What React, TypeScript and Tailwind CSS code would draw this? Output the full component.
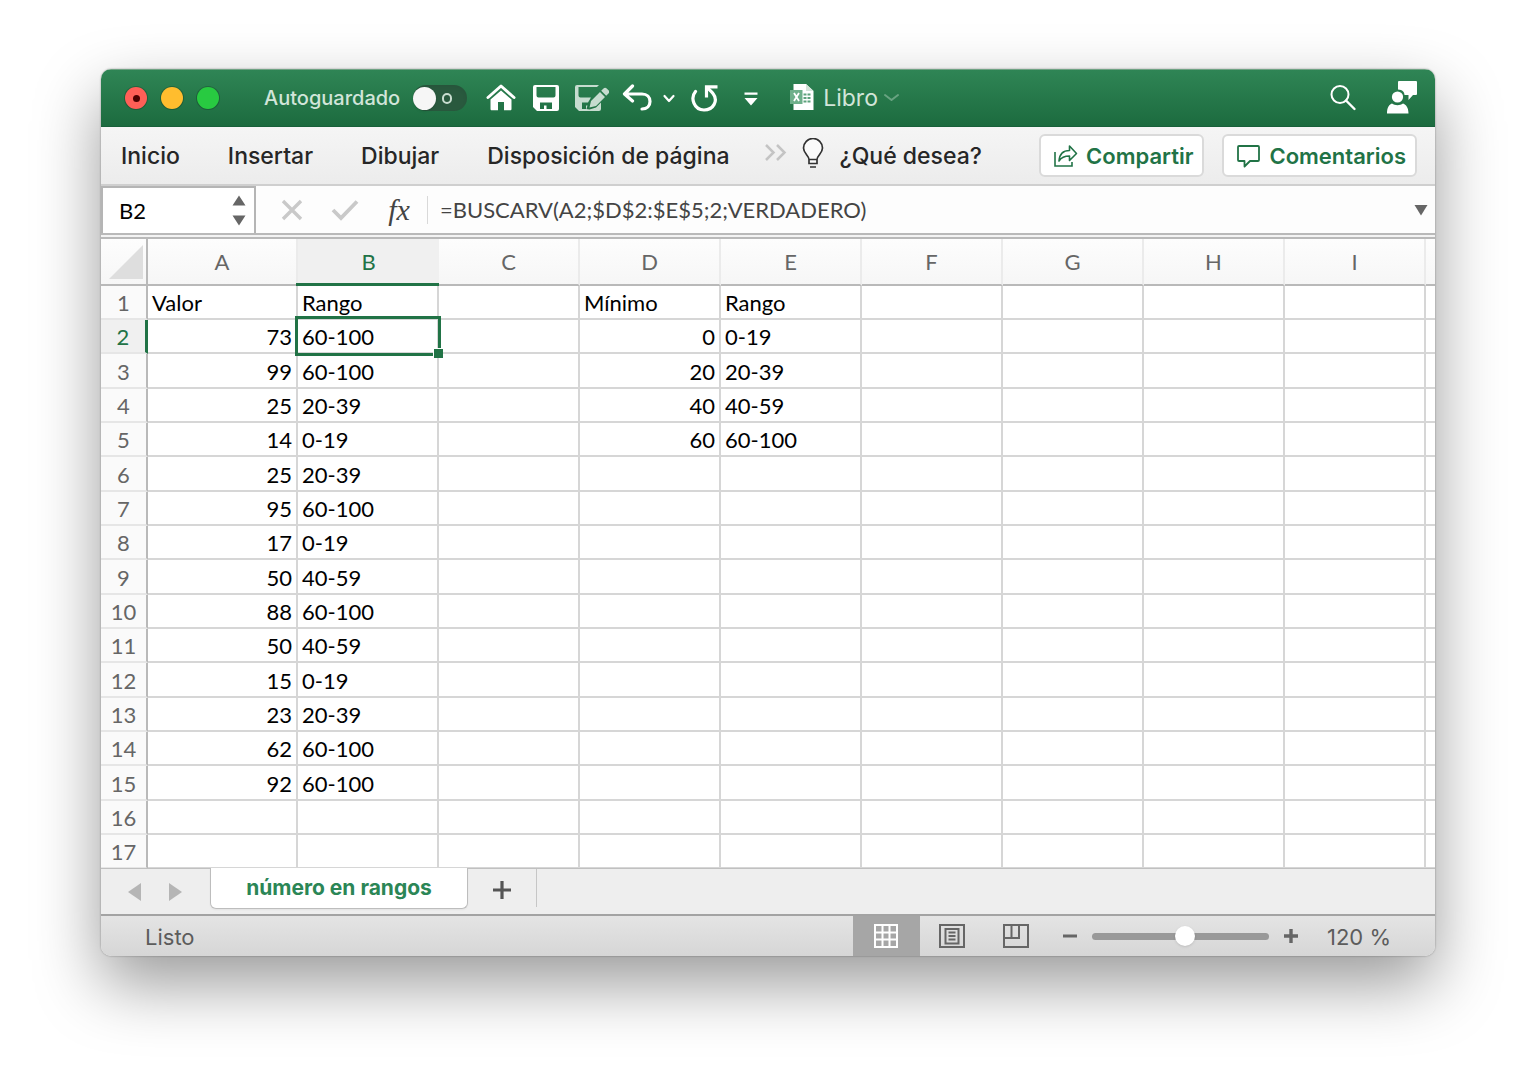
import React, { useState } from 'react';

const columns = ['A', 'B', 'C', 'D', 'E', 'F', 'G', 'H', 'I'];

const values = [
  [73, '60-100'],
  [99, '60-100'],
  [25, '20-39'],
  [14, '0-19'],
  [25, '20-39'],
  [95, '60-100'],
  [17, '0-19'],
  [50, '40-59'],
  [88, '60-100'],
  [50, '40-59'],
  [15, '0-19'],
  [23, '20-39'],
  [62, '60-100'],
  [92, '60-100'],
];

const ranges = [
  [0, '0-19'],
  [20, '20-39'],
  [40, '40-59'],
  [60, '60-100'],
];

const getCell = (row: number, column: string): string | number => {
  if (row === 1) {
    return { A: 'Valor', B: 'Rango', D: 'Mínimo', E: 'Rango' }[column] ?? '';
  }
  if (column === 'A' || column === 'B') {
    return values[row - 2]?.[column === 'A' ? 0 : 1] ?? '';
  }
  if (column === 'D' || column === 'E') {
    return ranges[row - 2]?.[column === 'D' ? 0 : 1] ?? '';
  }
  return '';
};

const TitleBar: React.FC = () => {
  const [autosave, setAutosave] = useState(false);

  return (
    <header className="flex h-[58px] items-center justify-between border-t border-[#6fa283] border-b border-b-[#18603a] bg-linear-to-b from-[#2f8555] to-[#1c6b3f] pr-[17px] pl-6 text-white">
      <div className="flex items-center">
        <div className="flex gap-[14px]">
          <button aria-label="Cerrar" className="flex size-[22px] items-center justify-center rounded-full bg-[#ff5f57] ring-1 ring-black/20">
            <span className="size-[7px] rounded-full bg-[#4d0000]" />
          </button>
          <button aria-label="Minimizar" className="size-[22px] rounded-full bg-[#ffbd2e] ring-1 ring-black/20" />
          <button aria-label="Ampliar" className="size-[22px] rounded-full bg-[#28ca41] ring-1 ring-black/20" />
        </div>

        <label className="ml-[45px] flex items-center gap-[13px] text-xl leading-6 font-medium text-[#d2e5d9]">
          Autoguardado
          <span className="relative flex h-[26px] w-[54px] items-center rounded-full bg-[#29593e] shadow-inner">
            <input
              type="checkbox"
              checked={autosave}
              onChange={(e) => setAutosave(e.target.checked)}
              className="peer absolute inset-0 size-full appearance-none"
            />
            <span className="pointer-events-none size-[23px] rounded-full bg-[#f6f6f6] shadow peer-checked:ml-[31px]" />
            <span className="pointer-events-none ml-[6px] h-[11px] w-[10px] rounded-full border-2 border-[#c9ddd0] peer-checked:hidden" />
          </span>
        </label>

        <div className="ml-[19px] flex items-center">
          <button aria-label="Inicio">
            <svg width="30" height="30" viewBox="0 0 30 30" fill="none">
              <path d="M2 14.500 15 3l13 11.500" stroke="white" strokeWidth="3" strokeLinecap="round" strokeLinejoin="round" />
              <path d="M4.500 16.500 15 7.500l10.500 9V26c0 .8-.5 1.300-1.300 1.300H18v-8.300h-6v8.300H5.800c-.8 0-1.300-.5-1.300-1.300z" fill="white" />
            </svg>
          </button>
          <button aria-label="Guardar" className="ml-4">
            <svg width="28" height="28" viewBox="0 0 28 28">
              <path fillRule="evenodd" fill="white" d="M3 1h22a2 2 0 0 1 2 2v22a2 2 0 0 1-2 2H5l-4-4V3a2 2 0 0 1 2-2zM4.500 3v8.500a2 2 0 0 0 2 2h15a2 2 0 0 0 2-2V3zM8 18.500V25h4v-3.500h2.500V25H20v-6.500z" />
            </svg>
          </button>
          <button aria-label="Guardar como" className="ml-[14px]">
            <svg width="35" height="28" viewBox="0 0 35 28">
              <path fillRule="evenodd" fill="#c6dccf" d="M3 1h22l-2 2H4.500v8.500a2 2 0 0 0 2 2h10.500L14 18.500H8V25h4v-3.500h1.500L12.500 25l3 .5 6.500-2 5-5V25a2 2 0 0 1-2 2H5l-4-4V3a2 2 0 0 1 2-2z" />
              <path fill="#c6dccf" d="m15.500 23.500 1.500-6.500L26 8l5 5-9 9zM27.200 6.800l2.300-2.300c1-1 2.200-1 3.200 0l1.800 1.800c1 1 1 2.200 0 3.200l-2.300 2.300z" />
            </svg>
          </button>
          <button aria-label="Deshacer" className="ml-[13px]">
            <svg width="32" height="28" viewBox="0 0 32 28" fill="none" stroke="white" strokeWidth="3.200" strokeLinecap="round" strokeLinejoin="round">
              <path d="M10.500 2 2.500 10l8 7M3.500 10H20c5 0 8 3.200 8 7.500S25 25 20 25" />
            </svg>
          </button>
          <button aria-label="Opciones de deshacer" className="ml-2">
            <svg width="14" height="28" viewBox="0 0 14 28" fill="none" stroke="white" strokeWidth="2.200" strokeLinecap="round" strokeLinejoin="round">
              <path d="m2.500 12 4.500 5 4.500-5" />
            </svg>
          </button>
          <button aria-label="Rehacer" className="ml-[14px]">
            <svg width="30" height="28" viewBox="0 0 30 28" fill="none" stroke="white" strokeWidth="3.200" strokeLinecap="round">
              <path d="M5.500 7.500C0 14 4 26 14 26c9.500 0 14.500-9.500 9-16.500-1.500-2-3.500-3.500-5.500-5.500" />
              <path d="M16.500 13.500V2.800h11" strokeLinecap="butt" />
            </svg>
          </button>
          <button aria-label="Personalizar" className="ml-[22px]">
            <svg width="18" height="28" viewBox="0 0 18 28">
              <path d="M2.500 8.500h13v2.200h-13zM2.500 14h13L9 21.500z" fill="white" />
            </svg>
          </button>
        </div>

        <button className="ml-[29px] flex items-center text-[23px] leading-7 text-[#d2e5d9]">
          <svg width="26" height="28" viewBox="0 0 26 28" aria-hidden="true">
            <path d="M4.500 0H17l7.500 7v19h-20z" fill="white" />
            <path d="M17 0v7h7.500" fill="#d4e5da" />
            <path d="M14.500 9.500h3v2h-3zm4 0h3v2h-3zm-4 3.500h3v2h-3zm4 0h3v2h-3zm-4 3.500h3v2h-3zm4 0h3v2h-3z" fill="#5da27c" />
            <path d="M1 6h12.500v14H1z" fill="#6fb08b" />
            <path d="m5 9 5 8M10 9l-5 8" stroke="white" strokeWidth="1.800" />
          </svg>
          <span className="ml-2">Libro</span>
          <svg width="18" height="28" viewBox="0 0 18 28" fill="none" className="ml-1" aria-hidden="true">
            <path d="m3 11 6.500 5L16 11" stroke="#68a381" strokeWidth="2" strokeLinecap="round" strokeLinejoin="round" />
          </svg>
        </button>
      </div>

      <div className="flex items-center gap-[29px]">
        <button aria-label="Buscar">
          <svg width="28" height="28" viewBox="0 0 28 28" fill="none" stroke="white" strokeWidth="2">
            <circle cx="11" cy="10.500" r="8.500" />
            <path d="m17 16.500 8.500 8.500" strokeWidth="2.400" strokeLinecap="round" />
          </svg>
        </button>
        <button aria-label="Cuenta">
          <svg width="32" height="36" viewBox="0 0 32 36" fill="white">
            <path d="M13 1h17a1 1 0 0 1 1 1v12a1 1 0 0 1-1 1h-3l-4.500 5v-5H18.500c0-3-2-5.300-6.500-5.500V2a1 1 0 0 1 1-1z" />
            <circle cx="11.500" cy="17" r="5.600" />
            <path d="M1 33.500c0-6 2-9 5-10 3 2.200 8 2.200 11 0 3 1 5.500 4 5.500 10z" />
          </svg>
        </button>
      </div>
    </header>
  );
};

const Ribbon: React.FC = () => (
  <nav className="flex h-[59px] items-center justify-between border-b-2 border-[#cfcfcf] bg-linear-to-b from-[#f5f5f5] to-[#ececec] pr-[18px] pl-5 text-[#262626]">
    <div className="flex items-center text-[23px] leading-7 font-medium">
      <button>Inicio</button>
      <button className="ml-12">Insertar</button>
      <button className="ml-12">Dibujar</button>
      <button className="ml-12">Disposición de página</button>
      <button aria-label="Más pestañas" className="ml-[34px]">
        <svg width="24" height="26" viewBox="0 0 24 26" fill="none" stroke="#c4c4c4" strokeWidth="2.500">
          <path d="m2 2 7.500 7.500L2 17M13 2l7.500 7.500L13 17" />
        </svg>
      </button>
      <button className="ml-[14px] flex items-center gap-4">
        <svg width="22" height="36" viewBox="0 0 22 36" fill="none" stroke="#333" strokeWidth="1.700" aria-hidden="true">
          <path d="M7 21.500c0-4-5.500-6-5.500-11.500a9.500 9.500 0 0 1 19 0c0 5.500-5.500 7.500-5.500 11.500zM7 21.500v4h8v-4M8 29h6" fill="#fafafa" />
        </svg>
        ¿Qué desea?
      </button>
    </div>
    <div className="flex gap-[18px] text-[22px] leading-7 font-semibold text-[#217346]">
      <button className="flex h-[43px] items-center gap-[7px] rounded-md border-2 border-[#dadada] bg-white pr-[9px] pl-3">
        <svg width="26" height="26" viewBox="0 0 26 26" fill="none" stroke="#217346" strokeWidth="1.600" aria-hidden="true">
          <path d="M2 9v14h17v-4" />
          <path d="M6 18c.5-7 4-10.500 10.500-10.500V3l7 7.500-7 7V13C12 13 8.500 14 6 18z" strokeLinejoin="round" />
        </svg>
        Compartir
      </button>
      <button className="flex h-[43px] items-center gap-[7px] rounded-md border-2 border-[#dadada] bg-white pr-[9px] pl-3">
        <svg width="26" height="26" viewBox="0 0 26 26" fill="none" stroke="#217346" strokeWidth="1.800" strokeLinejoin="round" aria-hidden="true">
          <path d="M3 3h19a1 1 0 0 1 1 1v13a1 1 0 0 1-1 1h-8l-5.500 5.500V18H3a1 1 0 0 1-1-1V4a1 1 0 0 1 1-1z" />
        </svg>
        Comentarios
      </button>
    </div>
  </nav>
);

const FormulaBar: React.FC = () => (
  <div className="flex h-[49px] items-center border-b-2 border-[#b9b9b9] bg-[#fdfdfd] font-[Lato,sans-serif] text-[22px] leading-7">
    <div className="flex h-full w-[155px] items-center justify-between border-2 border-b-0 border-[#b5b5b5] bg-white pr-2 pl-4">
      <input aria-label="Cuadro de nombres" defaultValue="B2" className="w-20 text-black outline-none" />
      <svg width="14" height="32" viewBox="0 0 14 32" fill="#666" aria-hidden="true">
        <path d="M.5 10.500 7 .5l6.500 10zM.5 20.500h13L7 30.500z" />
      </svg>
    </div>
    <button aria-label="Cancelar" className="ml-[25px]">
      <svg width="22" height="22" viewBox="0 0 22 22" fill="none" stroke="#c9c9c9" strokeWidth="3.400">
        <path d="m2 2 18 18M20 2 2 20" />
      </svg>
    </button>
    <button aria-label="Introducir" className="ml-7">
      <svg width="28" height="22" viewBox="0 0 28 22" fill="none" stroke="#c9c9c9" strokeWidth="3.800">
        <path d="m2 11 8 8L26 2.500" />
      </svg>
    </button>
    <button className="ml-[26px] w-7 font-['Liberation_Serif',serif] text-[30px] leading-8 text-[#444] italic">fx</button>
    <div className="ml-[14px] h-7 w-px bg-[#d9d9d9]" />
    <input
      aria-label="Barra de fórmulas"
      defaultValue="=BUSCARV(A2;$D$2:$E$5;2;VERDADERO)"
      className="ml-3 min-w-0 flex-1 text-[#444] outline-none"
    />
    <button aria-label="Expandir" className="mr-[7px]">
      <svg width="14" height="12" viewBox="0 0 14 12" fill="#666">
        <path d="M.5 1h13L7 11.500z" />
      </svg>
    </button>
  </div>
);

const Sheet: React.FC = () => (
  <table className="w-full table-fixed border-separate border-spacing-0 border-t-2 border-[#b9b9b9] bg-white font-[Lato,sans-serif] text-[22px] leading-7 text-black">
    <colgroup>
      <col className="w-[47px]" />
      {columns.map((column) => (
        <col key={column} className={column === 'A' ? 'w-[150px]' : 'w-[141px]'} />
      ))}
      <col />
    </colgroup>
    <thead>
      <tr className="h-[47px] bg-linear-to-b from-[#fdfdfd] to-[#f6f6f6] text-[#666]">
        <th aria-label="Seleccionar todo" className="border-r-2 border-b-2 border-[#b9b9b9] p-0">
          <svg width="36" height="36" viewBox="0 0 36 36" className="ml-2">
            <path d="M34 1v34H0z" fill="#dedede" />
          </svg>
        </th>
        {columns.map((column) =>
          column === 'B' ? (
            <th key={column} scope="col" className="relative border-b-2 border-[#217346] bg-[#f0f0f0] p-0 font-normal text-[#217346]">
              {column}
              <span className="absolute -bottom-[2px] -left-[2px] h-[3px] w-[143px] bg-[#217346]" />
            </th>
          ) : (
            <th key={column} scope="col" className="border-r-2 border-b-2 border-r-[#ebebeb] border-b-[#b9b9b9] p-0 font-normal">
              {column}
            </th>
          ),
        )}
        <th aria-hidden="true" className="border-b-2 border-[#b9b9b9] p-0" />
      </tr>
    </thead>
    <tbody>
      {Array.from({ length: 17 }, (_, i) => i + 1).map((row) => (
        <tr key={row} className="h-[34px] nth-[3n]:h-[35px]">
          <th
            scope="row"
            className={`border-b-2 border-b-[#e6e6e6] px-0 pt-[2px] pb-0 font-normal ${
              row === 2 ? 'border-r-3 border-r-[#217346] bg-[#f0f0f0] text-[#217346]' : 'border-r-2 border-r-[#b9b9b9] bg-[#fafafa] text-[#666]'
            }`}
          >
            {row}
          </th>
          {columns.map((column) => {
            const cell = getCell(row, column);
            return (
              <td
                key={column}
                className={`relative border-r-2 border-b-2 border-[#d6d6d6] px-1 pt-[2px] pb-0 ${
                  typeof cell === 'number' ? 'text-right' : 'text-left'
                }`}
              >
                {cell}
                {row === 2 && column === 'B' && (
                  <div className="pointer-events-none absolute -top-1 -right-1 -bottom-1 -left-[3px] z-10 border-3 border-[#217346]">
                    <span className="absolute -right-[5px] -bottom-[5px] size-[10px] border-t border-l border-white bg-[#217346]" />
                  </div>
                )}
              </td>
            );
          })}
          <td className="border-b-2 border-[#d6d6d6] p-0" />
        </tr>
      ))}
    </tbody>
  </table>
);

const SheetTabs: React.FC = () => (
  <div className="flex h-[45px] items-start bg-[#eeeeee] pl-[26px]">
    <button aria-label="Hoja anterior" className="mt-[13px]">
      <svg width="14" height="20" viewBox="0 0 14 20" fill="#b5b5b5">
        <path d="M14 1v18L1 10z" />
      </svg>
    </button>
    <button aria-label="Hoja siguiente" className="mt-[13px] ml-7">
      <svg width="14" height="20" viewBox="0 0 14 20" fill="#b5b5b5">
        <path d="M0 1v18l13-9z" />
      </svg>
    </button>
    <button className="relative -mt-px ml-[27px] h-[41px] w-[258px] rounded-b-md border border-t-0 border-[#bdbdbd] bg-white text-[21px] leading-6 font-bold text-[#2b8656] shadow-xs">
      número en rangos
    </button>
    <button aria-label="Nueva hoja" className="mt-[11px] ml-6">
      <svg width="20" height="20" viewBox="0 0 20 20" fill="none" stroke="#555" strokeWidth="3.200">
        <path d="M10 1v18M1 10h18" />
      </svg>
    </button>
    <div className="ml-6 h-[38px] w-px bg-[#c6c6c6]" />
  </div>
);

const StatusBar: React.FC = () => {
  const [zoom, setZoom] = useState(53);

  return (
    <footer className="flex h-[42px] items-center justify-between border-t-2 border-[#a3a3a3] bg-linear-to-b from-[#e4e4e4] to-[#d6d6d6] pr-11 pl-11 text-[22px] leading-6 text-[#5c5c5c]">
      <span className="pt-[2px]">Listo</span>
      <div className="flex h-full items-center">
        <button aria-label="Vista normal" className="flex h-full w-[67px] items-center justify-center bg-[#a6a6a6]">
          <svg width="26" height="26" viewBox="0 0 26 26" fill="none" stroke="white" strokeWidth="2">
            <path d="M2 2h22v22H2zM9.500 2v22M16.500 2v22M2 9.500h22M2 16.500h22" />
          </svg>
        </button>
        <button aria-label="Diseño de página" className="ml-[18px]">
          <svg width="28" height="26" viewBox="0 0 28 26" fill="none" stroke="#666" strokeWidth="2">
            <path d="M2 2h24v22H2zM7.500 6h13v14.500h-13zM10.500 9.500h7M10.500 13h7M10.500 16.500h7" />
          </svg>
        </button>
        <button aria-label="Salto de página" className="ml-9">
          <svg width="28" height="26" viewBox="0 0 28 26" fill="none" stroke="#666" strokeWidth="2">
            <path d="M2 2h24v22H2zM2 15h15V2M9.500 2v13" />
          </svg>
        </button>
        <button aria-label="Reducir" className="ml-8" onClick={() => setZoom(zoom - 5)}>
          <svg width="16" height="16" viewBox="0 0 16 16" stroke="#666" strokeWidth="3">
            <path d="M1 8h14" />
          </svg>
        </button>
        <input
          type="range"
          aria-label="Zoom"
          value={zoom}
          onChange={(e) => setZoom(Number(e.target.value))}
          className="ml-[14px] h-[7px] w-[177px] appearance-none rounded-full bg-[#999] [&::-webkit-slider-thumb]:size-5 [&::-webkit-slider-thumb]:appearance-none [&::-webkit-slider-thumb]:rounded-full [&::-webkit-slider-thumb]:bg-white [&::-webkit-slider-thumb]:shadow"
        />
        <button aria-label="Ampliar zoom" className="ml-[14px]" onClick={() => setZoom(zoom + 5)}>
          <svg width="16" height="16" viewBox="0 0 16 16" stroke="#666" strokeWidth="3.400">
            <path d="M1 8h14M8 1v14" />
          </svg>
        </button>
        <span className="ml-7 pt-[2px]">120 %</span>
      </div>
    </footer>
  );
};

const App: React.FC = () => (
  <div className="min-h-screen overflow-hidden bg-white px-[101px] pt-[69px] pb-[134px] font-[Inter,sans-serif]">
    <main className="overflow-hidden rounded-[10px] shadow-[0_0_2px_rgba(0,0,0,0.4),0_28px_66px_rgba(0,0,0,0.4)]">
      <TitleBar />
      <Ribbon />
      <FormulaBar />
      <div className="h-[2px] bg-[#f3f3f3]" />
      <div className="h-[632px] overflow-hidden border-b border-[#c0c0c0]">
        <Sheet />
      </div>
      <SheetTabs />
      <StatusBar />
    </main>
  </div>
);

export default App;
